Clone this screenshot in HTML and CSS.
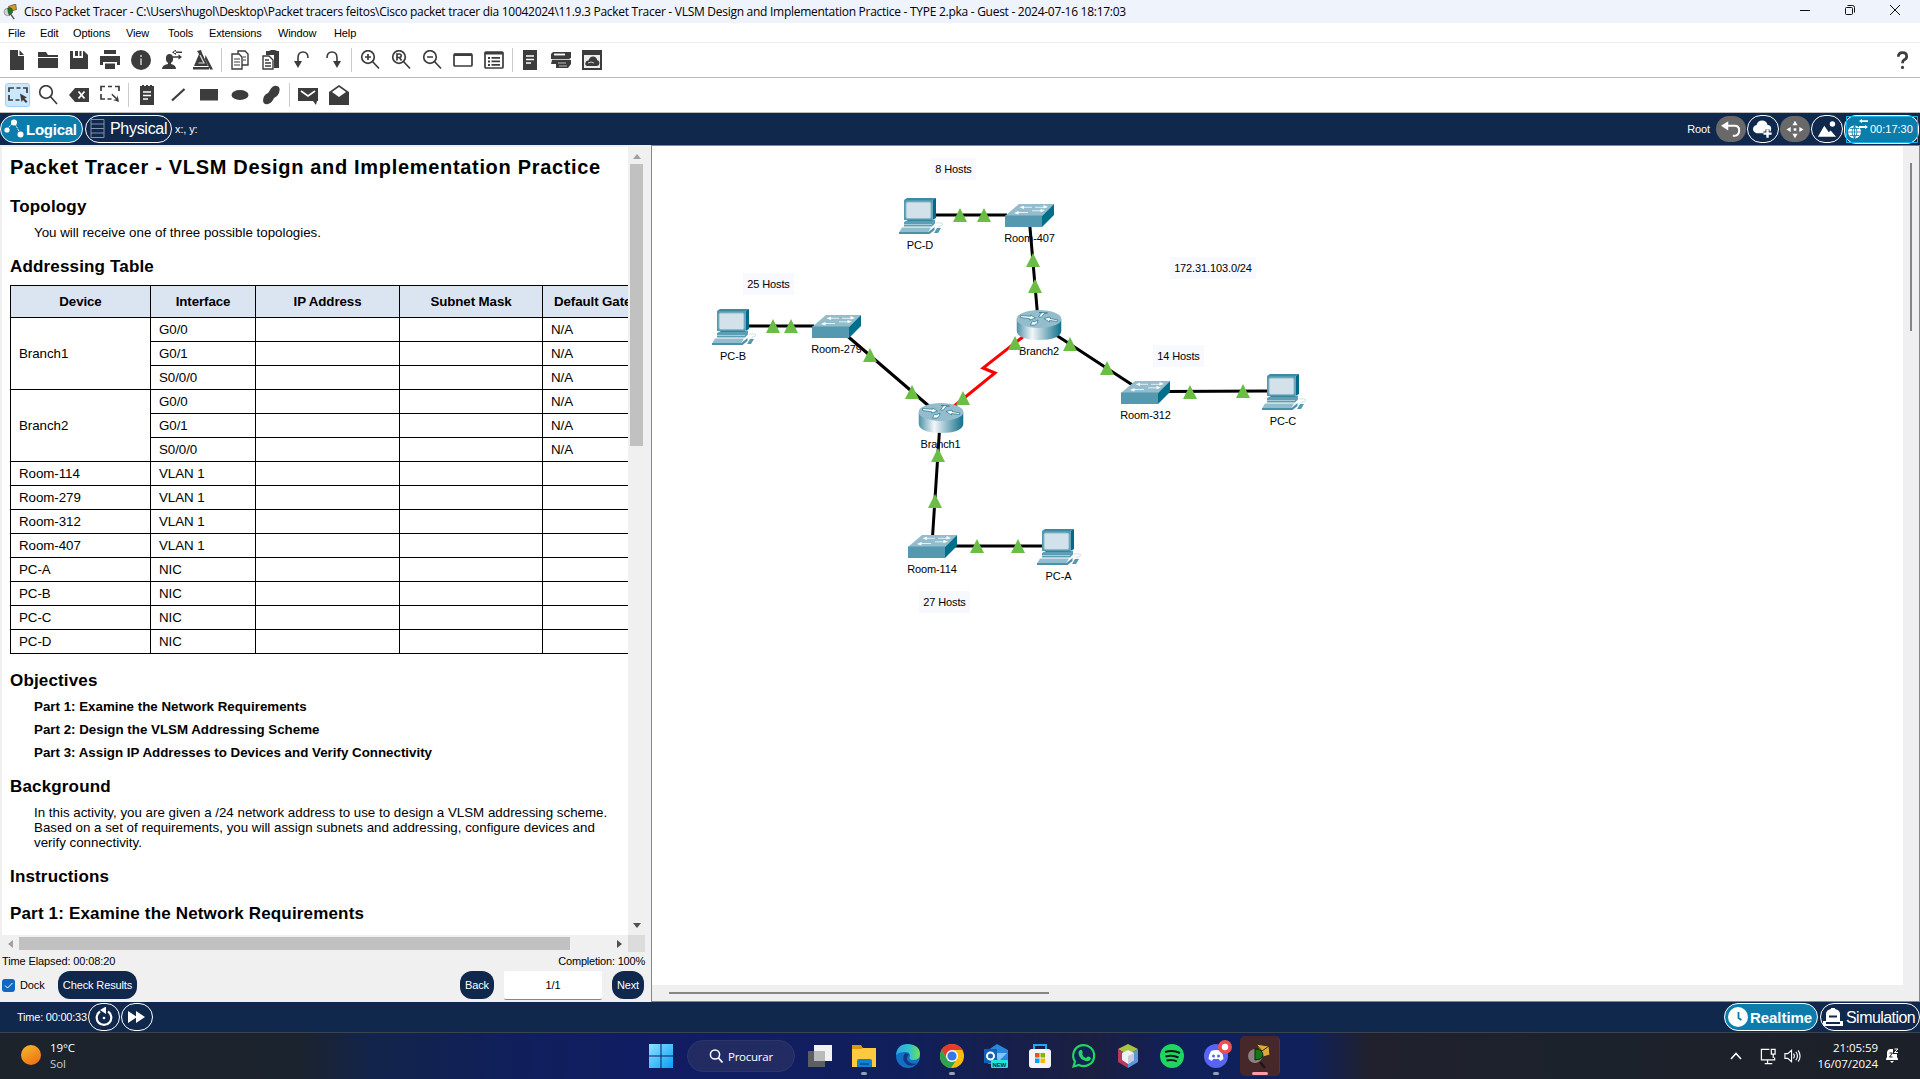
FILE: index.html
```html
<!DOCTYPE html>
<html lang="en">
<head>
<meta charset="utf-8">
<title>Cisco Packet Tracer</title>
<link rel="stylesheet" href="styles.css">
</head>
<body>
<div class="app">
  <header class="titlebar">
    <svg class="app-icon" viewBox="0 0 17 20"><path d="M6 3 15 0 16 7 8 9z" fill="#d99b28" stroke="#4a3a12" stroke-width=".8"/><circle cx="5" cy="10" r="4.6" fill="#d5d5d0" stroke="#777" stroke-width=".8"/><path d="M5 5q7-2 6 6l-4 3q-2-4-2-9z" fill="#1c7a22" stroke="#123" stroke-width=".6"/><path d="M9 13l4 6" stroke="#555" stroke-width="1.8"/></svg>
    <span class="title-text">Cisco Packet Tracer - C:\Users\hugol\Desktop\Packet tracers feitos\Cisco packet tracer dia 10042024\11.9.3 Packet Tracer - VLSM Design and Implementation Practice - TYPE 2.pka - Guest - 2024-07-16 18:17:03</span>
    <div class="win-controls">
      <svg viewBox="0 0 12 12"><path d="M1 6.5h10"/></svg>
      <svg viewBox="0 0 12 12"><rect x="1.5" y="3.5" width="7" height="7" rx="1"/><path d="M3.5 1.5h5q2 0 2 2v5"/></svg>
      <svg viewBox="0 0 12 12"><path d="M1 1l10 10M11 1L1 11"/></svg>
    </div>
  </header>
  <nav class="menubar"><span class="m1">File</span><span class="m2">Edit</span><span class="m3">Options</span><span class="m4">View</span><span class="m5">Tools</span><span class="m6">Extensions</span><span class="m7">Window</span><span class="m8">Help</span></nav>

  <div class="toolbar toolbar-main">
    <span class="tool"><svg viewBox="0 0 20 20"><path d="M3 0h8v6h6v14H3z"/><path d="M12.500 0 17 5h-4.500z"/></svg></span>
    <span class="tool"><svg viewBox="0 0 20 20"><path d="M0 2h8l2 3h10v2H0z"/><path d="M0 8h20v10H0z"/></svg></span>
    <span class="tool"><svg viewBox="0 0 20 20"><path d="M1 1h3v7h10V1h1l4 4v14H1z"/><path d="M6 1h3v5H6zM10.500 1h2v5h-2z"/></svg></span>
    <span class="tool"><svg viewBox="0 0 20 20"><path d="M4 0h12v4H4zM0 6h20v9h-3v-3H3v3H0z"/><path d="M5 13.500h10V19H5z"/></svg></span>
    <span class="tool"><svg viewBox="0 0 20 20"><circle cx="10" cy="10" r="10"/><path d="M9 8.500h2V15H9zM9 5h2v2H9z" fill="#aaa"/></svg></span>
    <span class="tool"><svg viewBox="0 0 20 20"><ellipse cx="7.500" cy="8.500" rx="3.600" ry="4.500"/><path d="M0 19q0-4 6-5v-3h3v3q5 1 5 5zM12 1.500h8V3h-8zM14-.5L10 2.300 14 5zM11 6.200h8v1.500h-8zM16.500 4.200l3.500 2.800-3.500 2.700z"/></svg></span>
    <span class="tool"><svg viewBox="0 0 20 20"><path d="M4 1l4-1 1 3 6 13H1L6 4zM0 17h16v2.500H0zM12.500 5L20 19.500h-3L12 9z"/><path d="M7 5l4 8H5.500" stroke="#ddd" stroke-width="1.200" fill="none"/></svg></span>
    <i class="sep"></i>
    <span class="tool"><svg viewBox="0 0 20 20"><g fill="#fff" stroke="#3c3c3c" stroke-width="1.400"><path d="M8 1h7l3 3v11H8z"/><path d="M2 4h7l3 3v12H2z"/></g><path d="M4 9h6M4 12h6M4 15h6M13 7h3M13 10h3" stroke="#3c3c3c" stroke-width="1.200"/></svg></span>
    <span class="tool"><svg viewBox="0 0 20 20"><path d="M5 1h3l2-1h4l2 1h2v17h-5V5H5z"/><path d="M2 6h6l4 4v9H2z" fill="#fff" stroke="#3c3c3c" stroke-width="1.400"/><path d="M4 10h4M4 13h6M4 16h6" stroke="#3c3c3c" stroke-width="1.300"/></svg></span>
    <span class="tool"><svg viewBox="0 0 20 20"><path d="M6 14V8q0-6 5-6t5 6" fill="none" stroke="#3c3c3c" stroke-width="1.600"/><path d="M2 11h8l-4 7z"/></svg></span>
    <span class="tool"><svg viewBox="0 0 20 20"><path d="M14 14V8q0-6-5-6T4 8" fill="none" stroke="#3c3c3c" stroke-width="1.600"/><path d="M10 11h8l-4 7z"/></svg></span>
    <i class="sep"></i>
    <span class="tool"><svg viewBox="0 0 20 20"><circle cx="8" cy="7" r="6.300" class="ln"/><path d="M12 11l7 7.500M5 7h6M8 4v6" class="ln"/></svg></span>
    <span class="tool"><svg viewBox="0 0 20 20"><circle cx="8" cy="7" r="6.300" class="ln"/><path d="M12 11l7 7.500M6 10.500V4h2.500q1.800.2 1.800 1.800T8.500 7.500H6M8.500 7.500l2 3" class="ln"/></svg></span>
    <span class="tool"><svg viewBox="0 0 20 20"><circle cx="8" cy="7" r="6.300" class="ln"/><path d="M12 11l7 7.500M5 7h6" class="ln"/></svg></span>
    <span class="tool"><svg viewBox="0 0 20 20"><rect x="1" y="4" width="18" height="12" rx="1" class="ln"/><path d="M1 3.500h18v2.500H1z"/></svg></span>
    <span class="tool"><svg viewBox="0 0 20 20"><rect x="1" y="2" width="18" height="16" rx="1" class="ln"/><path d="M1 2h18v2.500H1zM4 7h2v2H4zM4 10.500h2v2H4zM4 14h2v2H4zM7.500 7H16v1.800H7.500zM7.500 10.500H16v1.800H7.500zM7.500 14H16v1.800H7.500z"/></svg></span>
    <i class="sep sep-tight"></i>
    <span class="tool"><svg viewBox="0 0 20 20"><path d="M3 0h14v20H3z"/><path d="M6 6h8M6 9.500h8M6 13h5" stroke="#fff" stroke-width="1.300"/></svg></span>
    <span class="tool"><svg viewBox="0 0 20 20"><path d="M2 2h18v6l-2 1H0V4zM1 10h19v4l-3 4H5v-4H0z"/><path d="M3 4.500h11" stroke="#fff" stroke-width="1.800"/><path d="M1 9.500h18" stroke="#bbb" stroke-width=".8"/><path d="M7 13h8M8 16h8" stroke="#bbb"/></svg></span>
    <span class="tool"><svg viewBox="0 0 20 20"><path d="M0 0h20v20H0z"/><path d="M2 5h16v13H2z" fill="#eee"/><path d="M5 16q-2.500-1-1.500-3.500t3-2Q8 6 11.500 6.500T15 10q2.500.5 2.500 3T15 16z"/><path d="M6 13q3-2 6 0" stroke="#ccc" fill="none"/></svg></span>
    <svg class="help-icon" viewBox="0 0 12 20"><path d="M1.500 6q0-4.500 4.500-4.500T10.500 5.500q0 2.500-2.500 3.700-2 1-2 3.800" fill="none" stroke="#3c3c3c" stroke-width="3"/><circle cx="6" cy="17.500" r="1.700"/></svg>
  </div>
  <div class="toolbar toolbar-edit">
    <span class="tool tool-active"><svg viewBox="0 0 20 20"><path d="M1 7V3h5M8.500 3h4M15 3h4v5M1 10v5h4M7.500 15h4" class="ln"/><path d="M12 8.500l7 4-2.500 1 3 3-1.500 1.500-3-3-1.500 2z"/></svg></span>
    <span class="tool"><svg viewBox="0 0 20 20"><circle cx="8" cy="7" r="6.300" class="ln"/><path d="M12 11l7 8" class="ln"/></svg></span>
    <span class="tool"><svg viewBox="0 0 20 20"><path d="M0 10l6-7h14v14H6z"/><path d="M9.500 6.500l6 7M15.500 6.500l-6 7" stroke="#fff" stroke-width="1.800"/></svg></span>
    <span class="tool"><svg viewBox="0 0 20 20"><path d="M1 6V1.500h4M8 1.500h4M15 1.500h4V6M1 9v5h4M7.500 14h4" class="ln"/><path d="M12 8.500l5 4.500.5-3 1.500 7-6-2 3-.7-4.500-4.300z"/></svg></span>
    <i class="sep"></i>
    <span class="tool"><svg viewBox="0 0 20 20"><path d="M3 1h2V0h2v1h2V0h2v1h2V0h2v1h2v19H3z"/><path d="M6 7h8M6 10.500h8M6 14h5" stroke="#fff" stroke-width="1.300"/></svg></span>
    <span class="tool"><svg viewBox="0 0 20 20"><path d="M4 15.500L16.500 4" stroke="#3c3c3c" stroke-width="2.200"/></svg></span>
    <span class="tool"><svg viewBox="0 0 20 20"><path d="M1 4h18v11.500H1z"/></svg></span>
    <span class="tool"><svg viewBox="0 0 20 20"><ellipse cx="10" cy="10" rx="8.500" ry="5"/></svg></span>
    <span class="tool"><svg viewBox="0 0 20 20"><path d="M9 5q3-5 7-4t2 7q-1 3-5 5-2 5-6 6t-5-3q0-6 5-8 1-1 2-3z"/></svg></span>
    <i class="sep"></i>
    <span class="tool"><svg viewBox="0 0 20 20"><path d="M0 3h20v13h-1l-1 4-3-4H0z"/><path d="M3 6l7 5 7-5" stroke="#fff" stroke-width="1.600" fill="none"/></svg></span>
    <span class="tool"><svg viewBox="0 0 20 20"><path d="M0 7l10-7 10 7v13H0z"/><path d="M3 7l7-5 7 5-7 5z" fill="#fff"/></svg></span>
  </div>

  <div class="viewbar">
    <button class="pill pill-on logical"><svg viewBox="0 0 20 20"><path d="M3 10l7-7 7 13" stroke="#fff" stroke-width="1" fill="none" stroke-dasharray="2 1"/><circle cx="3" cy="11" r="2.600"/><circle cx="10" cy="3.500" r="3"/><circle cx="16.500" cy="15.500" r="3"/></svg><b>Logical</b></button>
    <button class="pill physical"><svg viewBox="0 0 16 20"><path d="M1 .5h13v18H1zM1 5h13M1 9.500h13M1 14h13" fill="none" stroke="#8293ae"/></svg><span>Physical</span></button>
    <span class="coords">x:, y:</span>
    <span class="root">Root</span>
    <span class="rbtn gray"><svg viewBox="0 0 22 18"><path d="M7 5h8q5 0 5 5t-5 6h-2" fill="none" stroke="#fff" stroke-width="2.200"/><path d="M0 5l8-5v10z"/></svg></span>
    <span class="rbtn"><svg viewBox="0 0 22 20"><path d="M4 14q-4-1-4-4.500T4 5q1-5 6-5t6 5q4 0 4 4 0 5-4 5z"/><path d="M16 10v9M11.500 14.500h9" stroke="#0f284c" stroke-width="4.500"/><path d="M16 10v9M11.500 14.500h9" stroke="#fff" stroke-width="2.600"/></svg></span>
    <span class="rbtn gray"><svg viewBox="0 0 22 22"><path d="M11 1l3 5H8zM11 21l3-5H8zM1 11l5-3v6zM21 11l-5-3v6zM9.500 9.500h3v3h-3z"/></svg></span>
    <span class="rbtn"><svg viewBox="0 0 22 18"><path d="M1 17L8 5l5 7 2-2 6 7z"/><circle cx="17" cy="3" r="3"/></svg></span>
    <span class="clock"><svg viewBox="0 0 20 20"><circle cx="6.500" cy="13" r="6.500"/><path d="M0 13h13M6.500 6.500v13M2 9.500h9M2 16.500h9M6.500 6.500q-5 6.500 0 13M6.500 6.500q5 6.500 0 13" fill="none" stroke="#0b7cab" stroke-width=".8"/><path d="M11 2l3-2v1.200h6v1.800h-6V4zM20 8l-3-2v1h-6v2h6v1z"/></svg>00:17:30</span>
  </div>

  <main class="workspace">
    <aside class="panel">
      <div class="viewer">
        <article class="doc">
          <h1>Packet Tracer - VLSM Design and Implementation Practice</h1>
          <h2 class="topo">Topology</h2>
          <p class="intro">You will receive one of three possible topologies.</p>
          <h2 class="addr">Addressing Table</h2>
          <table>
            <colgroup><col class="c1"><col class="c2"><col class="c3"><col class="c4"><col class="c5"></colgroup>
            <tr><th>Device</th><th>Interface</th><th>IP Address</th><th>Subnet Mask</th><th>Default Gateway</th></tr>
            <tr><td rowspan="3">Branch1</td><td>G0/0</td><td></td><td></td><td>N/A</td></tr>
            <tr><td>G0/1</td><td></td><td></td><td>N/A</td></tr>
            <tr><td>S0/0/0</td><td></td><td></td><td>N/A</td></tr>
            <tr><td rowspan="3">Branch2</td><td>G0/0</td><td></td><td></td><td>N/A</td></tr>
            <tr><td>G0/1</td><td></td><td></td><td>N/A</td></tr>
            <tr><td>S0/0/0</td><td></td><td></td><td>N/A</td></tr>
            <tr><td>Room-114</td><td>VLAN 1</td><td></td><td></td><td></td></tr>
            <tr><td>Room-279</td><td>VLAN 1</td><td></td><td></td><td></td></tr>
            <tr><td>Room-312</td><td>VLAN 1</td><td></td><td></td><td></td></tr>
            <tr><td>Room-407</td><td>VLAN 1</td><td></td><td></td><td></td></tr>
            <tr><td>PC-A</td><td>NIC</td><td></td><td></td><td></td></tr>
            <tr><td>PC-B</td><td>NIC</td><td></td><td></td><td></td></tr>
            <tr><td>PC-C</td><td>NIC</td><td></td><td></td><td></td></tr>
            <tr><td>PC-D</td><td>NIC</td><td></td><td></td><td></td></tr>
          </table>
          <h2 class="obj">Objectives</h2>
          <p class="part">Part 1: Examine the Network Requirements</p>
          <p class="part">Part 2: Design the VLSM Addressing Scheme</p>
          <p class="part">Part 3: Assign IP Addresses to Devices and Verify Connectivity</p>
          <h2 class="bg">Background</h2>
          <p class="para">In this activity, you are given a /24 network address to use to design a VLSM addressing scheme.<br>Based on a set of requirements, you will assign subnets and addressing, configure devices and<br>verify connectivity.</p>
          <h2 class="ins">Instructions</h2>
          <h2 class="p1">Part 1: Examine the Network Requirements</h2>
        </article>
        <div class="vscroll"><svg viewBox="0 0 8 5"><path d="M0 5l4-5 4 5z" fill="#a0a0a0"/></svg><i></i><svg class="down" viewBox="0 0 8 5"><path d="M0 0h8L4 5z" fill="#505050"/></svg></div>
        <div class="hscroll"><svg viewBox="0 0 5 8"><path d="M5 0v8L0 4z" fill="#a0a0a0"/></svg><i></i><svg class="right" viewBox="0 0 5 8"><path d="M0 0v8l5-4z" fill="#505050"/></svg></div>
        <div class="corner"></div>
      </div>
      <div class="status"><span>Time Elapsed: 00:08:20</span><span>Completion: 100%</span></div>
      <div class="actions">
        <span class="check"><svg viewBox="0 0 13 13"><path d="M3 6.500l2.500 2.500 5-5" fill="none" stroke="#fff"/></svg></span>
        <span class="dock">Dock</span>
        <button class="btn check-btn">Check Results</button>
        <button class="btn back-btn">Back</button>
        <span class="page-no">1/1</span>
        <button class="btn next-btn">Next</button>
      </div>
    </aside>
    <section class="canvas">
      <svg class="topology" viewBox="652 146 1251 839">
        <defs>
          <linearGradient id="metal"><stop offset="0" stop-color="#4c90a6"/><stop offset=".35" stop-color="#f2f7f9"/><stop offset=".65" stop-color="#8ab6c5"/><stop offset="1" stop-color="#0e6f8a"/></linearGradient>
          <symbol id="pc" viewBox="0 0 44 36"><path d="M5 2L8 0h29l-3.500 2z" fill="#3f8aa3"/><path d="M33.500 2L37 0v20l-3.500 2z" fill="#006a88"/><path d="M5 2h28.500v20H5z" fill="#5499b0"/><rect x="7" y="4" width="25" height="16.500" rx="1.500" fill="#d3e2ea" stroke="#8fb8c9"/><path d="M9 22h26l-3 2.500H5.500z" fill="#0c6c88"/><path d="M5 24l3-1.500h24l4-1v4l-3 3H5z" fill="#5c9fb5"/><path d="M5 26.500h28" stroke="#a8cbd7"/><path d="M3 29.500h29l-3 5H0z" fill="#93bccc"/><path d="M0 34h29.500l6-5v3l-5 4H0z" fill="#4b91a9"/><path d="M38 30h4l-3 5h-4z" fill="#5499b0"/><path d="M37 25q5-1 7 1 0 2-4 2v2" fill="none" stroke="#c5d9e1" stroke-width=".8"/></symbol>
          <symbol id="switch" viewBox="0 0 49 23"><path d="M0 12L14 0h35L37 12z" fill="#93bccc"/><path d="M0 11.500h37V23H0z" fill="#5499b0"/><path d="M37 12L49 0v11L37 23z" fill="#006f8c"/><path d="M18 3.300h9M30 3.300h9M12 8.500h11M27 6.800h9" stroke="#e4eff4" stroke-width="1"/><path d="M14.500 3.300L19 1.700V5zM43 3l-4.500-2v3.600zM9 9l4.500-2v3.500zM40 6.500l-4.500-1.500v3.300z" fill="#fff"/></symbol>
          <symbol id="router" viewBox="0 0 45 30"><path d="M0 9v12q2 9 22.500 9T45 21V9z" fill="url(#metal)"/><ellipse cx="22.500" cy="9" rx="22.500" ry="9" fill="#93bccc"/><g fill="#fff" stroke="#1f748d" stroke-width=".7"><path d="M4 5.500l10 .8v-1.300l5 3-6 2V8.700L4 7.500z"/><path d="M41 11.500l-8-1v1.500l-5.500-3.500 6-1.500v1.500l8 1.500z"/><path d="M31 3l-3 .3-3 3.700h-3L25 2.500h-2.500z"/><path d="M14 15l2-4 1.500 1 4-2-1 3.500-2 1.500z"/></g></symbol>
          <path id="up" d="M0-14L7 0H-7z" fill="#6abd45"/>
        </defs>
        <g fill="#f8f8ff"><path d="M931 158h45v22h-45zM743 273h51v22h-51zM1153 345h51v22h-51zM919 591h51v22h-51zM1170 257h86v22h-86z"/></g>
        <g class="label">
          <text x="953.500" y="173">8 Hosts</text><text x="768.500" y="288">25 Hosts</text><text x="1178.500" y="360">14 Hosts</text><text x="944.500" y="606">27 Hosts</text><text x="1213" y="272">172.31.103.0/24</text>
          <text x="920" y="249">PC-D</text><text x="733" y="360">PC-B</text><text x="1283" y="425">PC-C</text><text x="1058.500" y="580">PC-A</text>
          <text x="1029.500" y="242">Room-407</text><text x="836.500" y="353">Room-279</text><text x="1145.500" y="419">Room-312</text><text x="932" y="573">Room-114</text>
          <text x="1039" y="355">Branch2</text><text x="940.500" y="448">Branch1</text>
        </g>
        <path d="M935 215h72M748 326h66M1029.500 222L1037.500 314M845 334L930 407M1056 335L1134 386M1166 391.500l102-.5M939.500 430L932.500 537M955 546h88" stroke="#000" stroke-width="3"/>
        <path d="M1024 336L983 368l12 5L953 407" fill="none" stroke="#f00" stroke-width="3"/>
        <use href="#pc" x="899" y="198" width="44" height="36"/><use href="#pc" x="712" y="309" width="44" height="36"/><use href="#pc" x="1262" y="374" width="44" height="36"/><use href="#pc" x="1037" y="529" width="44" height="36"/>
        <use href="#switch" x="1005" y="204" width="49" height="23"/><use href="#switch" x="812" y="315" width="49" height="23"/><use href="#switch" x="1121" y="381" width="49" height="23"/><use href="#switch" x="908" y="535" width="49" height="23"/>
        <use href="#router" x="1016.500" y="310" width="45" height="30"/><use href="#router" x="918.500" y="403" width="45" height="30"/>
        <use href="#up" x="960" y="222"/><use href="#up" x="984" y="222"/><use href="#up" x="1033" y="267"/><use href="#up" x="1035" y="293"/>
        <use href="#up" x="773" y="333"/><use href="#up" x="791" y="333"/><use href="#up" x="870" y="362"/><use href="#up" x="912" y="399"/>
        <use href="#up" x="1015" y="350"/><use href="#up" x="1070" y="351"/><use href="#up" x="1107" y="375"/><use href="#up" x="1190" y="399"/><use href="#up" x="1243" y="398"/>
        <use href="#up" x="963" y="405"/><use href="#up" x="938" y="462"/><use href="#up" x="935" y="508"/><use href="#up" x="977" y="553"/><use href="#up" x="1018" y="553"/>
      </svg>
      <div class="cv-v"><i></i></div>
      <div class="cv-h"><i></i></div>
    </section>
  </main>

  <div class="timebar">
    <span class="sim-time">Time: 00:00:33</span>
    <span class="tbtn"><svg viewBox="0 0 20 20"><path d="M6 4.500a7.300 7.300 0 1 0 8 0" fill="none" stroke="#fff" stroke-width="2.200"/><path d="M6 3l6-3.500V7z"/><circle cx="10" cy="11" r="1.300"/></svg></span>
    <span class="tbtn"><svg viewBox="0 0 20 20"><path d="M1 4l9 6-9 6zM9 4l9 6-9 6z"/></svg></span>
    <button class="pill pill-on realtime"><svg viewBox="0 0 20 20"><circle cx="10" cy="10" r="10"/><path d="M10.500 5v6l3 2" stroke="#0b7cab" stroke-width="1.800" fill="none"/></svg><b>Realtime</b></button>
    <button class="pill simulation"><svg viewBox="0 0 20 20"><path d="M3 15V7q0-4 5-5V1h4v1q5 1 5 5v8zM0 14h3v3h14v-3h3v5H0z"/><path d="M6 9.500h8" stroke="#0f284c" stroke-width="2"/></svg><span>Simulation</span></button>
  </div>

  <footer class="taskbar">
    <div class="weather"><i class="sun"></i><span>19°C<br><em>Sol</em></span></div>
    <div class="apps">
      <span class="app-slot win"><svg viewBox="0 0 24 24"><defs><linearGradient id="w" x2="1" y2="1"><stop stop-color="#8be4ff"/><stop offset="1" stop-color="#0a9df5"/></linearGradient></defs><path d="M0 0h11.500v11.500H0zM12.500 0H24v11.500H12.500zM0 12.500h11.500V24H0zM12.500 12.500H24V24H12.500z" fill="url(#w)"/></svg></span>
      <span class="search"><svg viewBox="0 0 14 14"><circle cx="6" cy="5.500" r="4.600" fill="none" stroke="#fff" stroke-width="1.500"/><path d="M9.500 9l4 4.500" stroke="#fff" stroke-width="1.700"/></svg>Procurar</span>
      <span class="app-slot"><svg viewBox="0 0 24 24"><path d="M0 7h17v16H0z" fill="#5d5f62"/><path d="M6 1h18v16H6z" fill="#f2f2f2"/><path d="M6 7h11v10H6z" fill="#b9babc"/></svg></span>
      <span class="app-slot open"><svg viewBox="0 0 24 24"><path d="M0 1h9l2 3h12v4H0z" fill="#d99a0c"/><path d="M0 5h9l2-1h13v19H0z" fill="#fcc93f"/><path d="M5 17q0-2 2-2h11q2 0 2 2v6H5z" fill="#0f83d3"/><path d="M8 19h9v2H8z" fill="#0a5a9c"/></svg></span>
      <span class="app-slot"><svg viewBox="0 0 24 24"><defs><linearGradient id="e" x2="1"><stop stop-color="#2aa7ee"/><stop offset=".6" stop-color="#35c6c3"/><stop offset="1" stop-color="#6fe04f"/></linearGradient></defs><circle cx="12" cy="12" r="12" fill="#1370c7"/><path d="M0 11Q1 0 12 0q12 1 12 10 0 6-7 6-5 0-3-4 0-4-5-4-6 0-9 3z" fill="url(#e)"/><path d="M9 9q-4 6 1 11 5 4 12-1-5 2-9-1-4-3 0-8z" fill="#123a80"/></svg></span>
      <span class="app-slot open"><svg viewBox="0 0 24 24"><circle cx="12" cy="12" r="12" fill="#f9bc0c"/><path d="M1.600 6A12 12 0 0 1 22.400 6H12L7 15z" fill="#e33b2e"/><path d="M1.600 6A12 12 0 0 0 11 24l6-9-10 0z" fill="#2da44e"/><circle cx="12" cy="12" r="6" fill="#fff"/><circle cx="12" cy="12" r="4.600" fill="#3278e8"/></svg></span>
      <span class="app-slot"><svg viewBox="0 0 24 24"><path d="M4 6l9-6 11 6v14H4z" fill="#2a86d8"/><path d="M8 9h15l-8 8z" fill="#7cc7f5"/><path d="M0 5h13v14H0z" fill="#0f62ba"/><circle cx="6.500" cy="12" r="3.500" fill="none" stroke="#fff" stroke-width="2"/><rect x="7" y="16" width="17" height="8" rx="1" fill="#25e2dc"/><text x="8.500" y="22.800" class="new-tag">NEW</text></svg></span>
      <span class="app-slot"><svg viewBox="0 0 24 24"><path d="M6 6V1h12v5" fill="none" stroke="#22a8ee" stroke-width="2"/><rect x="1" y="5" width="22" height="19" rx="3" fill="#f4f4f4"/><path d="M7 9h4.500v4.500H7z" fill="#f04f23"/><path d="M12.500 9H17v4.500h-4.500z" fill="#7db900"/><path d="M7 14.500h4.500V19H7z" fill="#04a3ee"/><path d="M12.500 14.500H17V19h-4.500z" fill="#fcb600"/></svg></span>
      <span class="app-slot"><svg viewBox="0 0 24 24"><path d="M1.500 22.500L3 17.500A10.500 10.500 0 1 1 7 21z" fill="#122454" stroke="#25d366" stroke-width="2.200"/><path d="M8 6q2-1 2.500 1.500t-.5 2.500q1 3 4 4 1.500-2 2.500-1.500 3 1 2.300 2.500-1.500 3-5 2Q8 15.500 6.500 10 6 7.500 8 6z" fill="#25d366"/></svg></span>
      <span class="app-slot"><svg viewBox="0 0 24 24"><path d="M12 0l10 5-10 6L2 5z" fill="#a9c23f"/><path d="M2 5l10 6v13L2 18z" fill="#b8395b"/><path d="M22 5l-10 6v13l10-6z" fill="#5a96d8"/><path d="M12 6l6 3v7l-6 4-6-4V9z" fill="#eef1f3"/><path d="M12 12l6-3v7l-6 4z" fill="#c5ced6"/></svg></span>
      <span class="app-slot"><svg viewBox="0 0 24 24"><circle cx="12" cy="12" r="12" fill="#1ed760"/><path d="M5 8q8-2.500 15 1M5.500 12.500q7-2 13 1M6.500 16.500q6-1.500 10.500 1" fill="none" stroke="#0c1a1a" stroke-width="2"/></svg></span>
      <span class="app-slot open"><svg class="discord" viewBox="0 0 28 28"><circle cx="12" cy="16" r="12" fill="#5865f2"/><path d="M7 11q5-2 10 0 2.500 4 2.500 8l-3.500 2-1-2H9l-1 2-3.500-2q0-4 2.500-8z" fill="#fff"/><circle cx="9.500" cy="16" r="1.500" fill="#5865f2"/><circle cx="14.500" cy="16" r="1.500" fill="#5865f2"/><circle cx="21" cy="7" r="7" fill="#ed4f55"/><circle cx="21" cy="7" r="3.200" fill="#fff"/></svg></span>
      <span class="app-slot current"><svg viewBox="0 0 24 24"><path d="M8 0l13 2 1 9-7 2z" fill="#dba93d" stroke="#3b2c10"/><path d="M8 0l6 7 7-5" fill="none" stroke="#3b2c10"/><circle cx="7" cy="12" r="7" fill="#8e817f"/><path d="M7 5q8 0 8 7l-3 3-5 1z" fill="#14781b" stroke="#052a08"/><path d="M12 18l5 6" stroke="#1d1717" stroke-width="2.300"/></svg></span>
    </div>
    <div class="tray">
      <svg class="chev" viewBox="0 0 12 8"><path d="M1 7l5-5.500L11 7" fill="none" stroke="#fff" stroke-width="1.600"/></svg>
      <svg class="net" viewBox="0 0 18 18"><path d="M10 1.500H1.500v11h14V10M5 16.500h8M8 12.500v4M12 1.500h4v5h-4zM14 6.500v4" fill="none" stroke="#fff" stroke-width="1.300"/></svg>
      <svg class="vol" viewBox="0 0 18 14"><path d="M1 4.500h3L8 1v12L4 9.500H1zM10 4.500q2 2.500 0 5M12.500 2.500q3.500 4.500 0 9M15 1q4 6 0 12" fill="none" stroke="#fff" stroke-width="1.200"/></svg>
      <span class="datetime">21:05:59<br>16/07/2024</span>
      <svg class="bell" viewBox="0 0 14 16"><path d="M1 11l1-2V5q0-4 4-4h2v5h4v3l1 2v1H1zM5 13h4l-2 2z" fill="#fff"/><path d="M9.500 1H13L9.500 4.500H13" fill="none" stroke="#fff"/><path d="M4.500 5h3l-3 4h3" fill="none" stroke="#1e232b"/></svg>
    </div>
  </footer>
</div>
</body>
</html>
```
FILE: styles.css
```css
* { box-sizing: border-box; }
body { margin: 0; background: #fff; font-family: "Liberation Sans", Arial, sans-serif; font-size: 11px; letter-spacing: -.12px; color: #000; overflow: hidden; }
svg { display: block; flex: none; }
button { font: inherit; letter-spacing: inherit; color: inherit; background: none; border: 0; padding: 0; margin: 0; }
.app { width: 1920px; height: 1079px; display: flex; flex-direction: column; }
.app > * { flex: none; }

.titlebar { height: 23px; background: #eff3fb; display: flex; align-items: center; padding-left: 3px; }
.app-icon { width: 15px; height: 16px; }
.title-text { font-family: "Open Sans", "Noto Sans", sans-serif; font-size: 12px; margin-left: 6px; white-space: nowrap; letter-spacing: -.275px; }
.win-controls { margin-left: auto; display: flex; gap: 33px; padding-right: 19px; padding-bottom: 3px; }
.win-controls svg { width: 12px; height: 12px; fill: none; stroke: #111; }
.menubar { height: 20px; border-bottom: 1px solid #ececec; display: flex; align-items: center; padding: 0 0 0 8px; }
.menubar span { white-space: nowrap; }
.m1 { width: 32px; } .m2 { width: 33px; } .m3 { width: 53px; } .m4 { width: 42px; } .m5 { width: 41px; } .m6 { width: 69px; } .m7 { width: 56px; }

.toolbar { height: 35px; border-bottom: 1px solid #bdbdbd; display: flex; align-items: center; padding-left: 1px; }
.tool { width: 31px; height: 24px; display: flex; align-items: center; justify-content: center; }
.tool svg { width: 20px; height: 20px; fill: #3c3c3c; }
.tool .ln { fill: none; stroke: #3c3c3c; stroke-width: 1.7; }
.tool-active { width: 25px; margin: 0 2px 0 4px; background: #cce8ff; border: 1px solid #99d1ff; border-radius: 3px; }
.sep { width: 1px; height: 24px; background: #ccc; margin: 0 2.7px 0 2.8px; }
.sep-tight { margin: 0 2px; }
.help-icon { width: 11px; height: 19px; margin-left: auto; margin-right: 12px; fill: #3c3c3c; }

.viewbar { height: 32px; background: #0f284c; color: #fff; display: flex; align-items: center; }
.pill { height: 28px; border: 1.500px solid #fff; border-radius: 14px; display: flex; align-items: center; white-space: nowrap; font-size: 16px; }
.pill svg { width: 20px; height: 20px; fill: #fff; }
.pill-on { background: #0b7cab; }
.pill-on b { font-size: 15px; }
.logical { width: 83px; padding-left: 3px; }
.logical b { margin-left: 2px; letter-spacing: -.25px; }
.physical { width: 87px; margin-left: 2px; padding-left: 4px; }
.physical svg { width: 16px; margin-right: 4px; }
.physical span { letter-spacing: -.3px; }
.coords { margin-left: 3px; }
.root { margin-left: auto; margin-right: 5px; }
.rbtn { width: 32px; height: 28px; border: 1.500px solid #fff; border-radius: 14px; display: flex; align-items: center; justify-content: center; }
.rbtn svg { width: 20px; height: 19px; fill: #fff; }
.rbtn.gray { width: 30px; height: 26px; border: 0; background: #696969; margin: 0 1px; }
.clock { width: 75px; height: 29px; margin-left: 1px; margin-right: 1px; border: 1.500px solid #fff; border-radius: 12px; background: #0b7cab; outline: 1px solid #10b4e8; outline-offset: -1px; display: flex; align-items: center; padding-left: 3px; gap: 2px; letter-spacing: 0; }
.clock { outline: 0; box-shadow: none; position: relative; }
.clock::after { content: ""; position: absolute; inset: 0 0 0 1px; border: 1px solid #10b4e8; }
.clock svg { width: 20px; height: 20px; fill: #fff; }

.workspace { height: 857px; display: flex; }
.panel { width: 651px; background: #f0f0f0; padding: 2px 0 0 2px; display: flex; flex-direction: column; }
.viewer { width: 643px; height: 805px; display: grid; grid-template: 788px 17px / 626px 17px; }
.doc { background: #fff; overflow: hidden; padding: 8px 0 0 8px; font-size: 13.330px; letter-spacing: 0; white-space: nowrap; }
.doc h1 { margin: 0; font-size: 20px; line-height: 24px; letter-spacing: .68px; }
.doc h2 { margin: 17px 0 0; font-size: 17px; line-height: 20px; letter-spacing: .16px; }
.doc .topo { margin-top: 18px; }
.doc p { margin: 0 0 0 24px; line-height: 15px; }
.doc .intro, .doc .para { margin-top: 8px; }
.doc .part { margin-top: 8px; font-weight: bold; }
.doc table { border-collapse: collapse; table-layout: fixed; width: 668px; margin-top: 8px; }
.c1 { width: 140px; } .c2 { width: 105px; } .c3 { width: 144px; } .c4 { width: 143px; } .c5 { width: 136px; }
.doc tr { height: 24px; }
.doc tr:first-child { height: 32px; }
.doc th { background: #dbe5f1; border: 1px solid #000; padding: 0 0 1px; letter-spacing: -.1px; }
.doc th:last-child { text-align: left; padding-left: 11px; }
.doc td { border: 1px solid #000; padding: 0 0 1px 8px; line-height: 15px; letter-spacing: -.05px; }
.doc .ins { margin-top: 17px; }
.doc .obj { margin-top: 17px; }
.vscroll { background: #f0f0f0; display: flex; flex-direction: column; align-items: center; padding: 7px 0; }
.vscroll svg { width: 8px; height: 5px; }
.vscroll i { width: 13px; height: 282px; margin-top: 5px; background: #c1c1c1; }
.vscroll .down { margin-top: auto; }
.hscroll { background: #f0f0f0; display: flex; align-items: center; padding: 0 6px; }
.hscroll svg { width: 5px; height: 8px; }
.hscroll i { width: 551px; height: 13px; margin-left: 6px; background: #c1c1c1; }
.hscroll .right { margin-left: auto; }
.corner { background: #dcdcdc; }
.status { height: 18px; width: 643px; display: flex; justify-content: space-between; align-items: center; }
.status span:last-child { letter-spacing: -.2px; }
.actions { height: 30px; width: 642px; display: flex; align-items: center; }
.check { width: 13px; height: 13px; background: #1069c0; border-radius: 3px; }
.dock { margin-left: 5px; width: 38px; }
.btn { height: 28px; border-radius: 12px; background: #0f284c; color: #fff; }
.check-btn { width: 79px; }
.back-btn { width: 34px; margin-left: auto; }
.page-no { width: 98px; height: 29px; margin: 0 10px; background: #fff; border-bottom: 1px solid #868686; border-radius: 2px; display: flex; align-items: center; justify-content: center; }
.next-btn { width: 32px; }

.canvas { width: 1269px; border: 1px solid #82869a; background: #efefef; display: grid; grid-template: 839px 16px / 1251px 16px; }
.topology { width: 1251px; height: 839px; background: #fff; }
.label { font-size: 11px; text-anchor: middle; }
.cv-v { padding: 17px 0 0 7px; }
.cv-v i { display: block; width: 2px; height: 168px; background: #858585; }
.cv-h { padding: 7px 0 0 17px; }
.cv-h i { display: block; width: 380px; height: 2px; background: #858585; }

.timebar { height: 30px; background: #0f284c; color: #fff; display: flex; align-items: center; padding-left: 17px; }
.sim-time { width: 71px; white-space: nowrap; letter-spacing: -.22px; }
.tbtn { width: 32px; height: 28px; border: 1.500px solid #fff; border-radius: 14px; display: flex; align-items: center; justify-content: center; margin-right: 1px; }
.tbtn svg { width: 20px; height: 20px; fill: #fff; }
.realtime { width: 94px; margin-left: auto; padding-left: 3px; }
.realtime b { margin-left: 2px; letter-spacing: -.05px; }
.simulation { width: 100px; margin-left: 2px; padding-left: 2px; }
.simulation span { margin: 2px 0 0 3px; letter-spacing: -.55px; }

.taskbar { height: 47px; border-top: 1px solid #3b4353; color: #fff; font-family: "Open Sans", "Noto Sans", sans-serif; font-size: 12px; display: grid; grid-template-columns: 639px 1fr auto; background: linear-gradient(90deg, #1d232b 0, #1b232e 300px, #12244a 370px, #101f5c 520px, #111c63 660px, #101f5c 900px, #1b1f40 1090px, #10205a 1180px, #10205a 1310px, #20212d 1370px, #1c222b 1560px, #1c2029 1920px); }
.weather { display: flex; padding: 7px 0 0 21px; line-height: 16px; gap: 9px; font-size: 11.500px; }
.weather em { font-style: normal; color: #c6cad0; }
.sun { width: 20px; height: 20px; margin-top: 5px; border-radius: 50%; background: linear-gradient(150deg, #f3bd2e, #f0660f); }
.apps { display: flex; align-items: center; }
.app-slot { width: 44px; height: 46px; display: flex; flex-direction: column; align-items: center; justify-content: center; position: relative; }
.app-slot svg { width: 24px; height: 24px; overflow: visible; }
.app-slot .discord { width: 28px; height: 28px; margin: -4px 0 0 4px; }
.win { width: 48px; padding-right: 4px; }
.search { width: 108px; height: 32px; margin-right: 3px; border-radius: 16px; background: #222c63; border: 1px solid #2b376c; display: flex; align-items: center; padding-left: 21px; gap: 5px; font-size: 11.500px; letter-spacing: -.25px; }
.search svg { width: 14px; height: 14px; }
.open::after, .current::after { content: ""; position: absolute; bottom: 4px; width: 6px; height: 3px; border-radius: 2px; background: #9aa0b8; }
.current { width: 40px; height: 40px; margin-left: 2px; background: #46282b; border-radius: 5px; border-right: 1px solid #5a3336; }
.current::after { width: 16px; bottom: 1px; background: #ff9aa8; }
.new-tag { font: bold 6px "Liberation Sans", sans-serif; fill: #07304a; }
.tray { display: flex; align-items: center; padding-right: 21px; }
.chev { width: 12px; height: 8px; margin-right: 18px; }
.net { width: 17px; height: 17px; margin-right: 7px; }
.vol { width: 17px; height: 14px; margin-right: 16px; }
.datetime { text-align: right; line-height: 16px; font-size: 11.500px; letter-spacing: -.05px; }
.bell { width: 14px; height: 16px; margin-left: 7px; }
```
